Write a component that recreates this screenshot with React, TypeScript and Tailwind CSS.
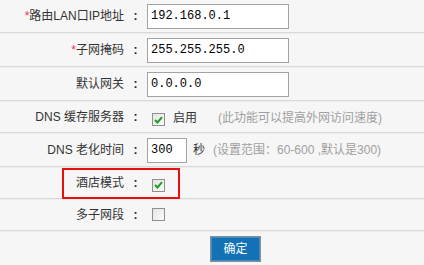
import { ReactNode } from "react";

const font = { fontFamily: '"Liberation Sans", "Noto Sans CJK SC", sans-serif' };

function CheckBox({ checked }: { checked: boolean }) {
  return (
    <span className="inline-flex h-[13px] w-[13px] items-center justify-center border border-[#8f8f8f] bg-gradient-to-br from-[#e4e4e4] to-[#fbfbfb]">
      {checked && (
        <svg width="9" height="8" viewBox="0 0 9 8">
          <path d="M1 4 L3.5 6.5 L8 1.2" fill="none" stroke="#1e9e1e" strokeWidth="2" />
        </svg>
      )}
    </span>
  );
}

function Row({
  label,
  required,
  first,
  h,
  children,
  marked,
}: {
  label: string;
  required?: boolean;
  first?: boolean;
  h: string;
  children: ReactNode;
  marked?: boolean;
}) {
  return (
    <div
      className={`relative grid grid-cols-[125px_21px_1fr] items-center border-b border-[#d9d9d9] ${
        first ? "" : "border-t border-t-[#ececec]"
      } ${h}`}
    >
      <div className="pr-[1px] text-right text-[12px] text-[#333]">
        {required && <span className="text-[#e8336b]">*</span>}
        {label}
      </div>
      <div className="text-center text-[12px] font-bold text-[#222]">:</div>
      <div className="flex items-center pl-[1px]">{children}</div>
      {marked && (
        <div className="absolute left-[62px] top-0 h-[31px] w-[118px] border-2 border-[#e8100f]" />
      )}
    </div>
  );
}

function TextBox({ value, w }: { value: string; w: string }) {
  return (
    <div
      className={`flex h-[25px] items-center border border-[#a3a3a3] bg-white pl-[3px] text-[12px] text-black ${w}`}
      style={{ fontFamily: '"Liberation Mono", monospace' }}
    >
      {value}
    </div>
  );
}

export default function App() {
  return (
    <div className="h-[265px] w-[424px] overflow-hidden bg-[#f6f6f6]" style={font}>
      <Row label="路由LAN口IP地址" required first h="h-[33px]">
        <TextBox value="192.168.0.1" w="w-[142px]" />
      </Row>
      <Row label="子网掩码" required h="h-[34px]">
        <TextBox value="255.255.255.0" w="w-[142px]" />
      </Row>
      <Row label="默认网关" h="h-[34px]">
        <TextBox value="0.0.0.0" w="w-[142px]" />
      </Row>
      <Row label="DNS 缓存服务器" h="h-[32px]">
        <span className="ml-[5px] mt-[3px]">
          <CheckBox checked />
        </span>
        <span className="ml-[8px] mt-[2px] text-[12px] text-[#333]">启用</span>
        <span className="ml-[21px] mt-[2px] text-[12px] text-[#a0a0a0]">(此功能可以提高外网访问速度)</span>
      </Row>
      <Row label="DNS 老化时间" h="h-[34px]">
        <TextBox value="300" w="w-[40px]" />
        <span className="ml-[6px] text-[12px] text-[#333]">秒</span>
        <span className="ml-[8px] text-[12px] text-[#a0a0a0]">(设置范围：60-600 ,默认是300)</span>
      </Row>
      <Row label="酒店模式" h="h-[32px]" marked>
        <span className="ml-[5px] mt-[2px]">
          <CheckBox checked />
        </span>
      </Row>
      <Row label="多子网段" h="h-[32px]">
        <span className="ml-[5px] mt-[2px]">
          <CheckBox checked={false} />
        </span>
      </Row>
      <div className="border-t border-[#ececec] pl-[210px] pt-[4px]">
        <button className="h-[26px] w-[51px] border border-[#8c8c8c] bg-[#1272b5] text-[12px] text-white shadow-[inset_0_0_0_1px_#3d8fcb]">
          确定
        </button>
      </div>
    </div>
  );
}
